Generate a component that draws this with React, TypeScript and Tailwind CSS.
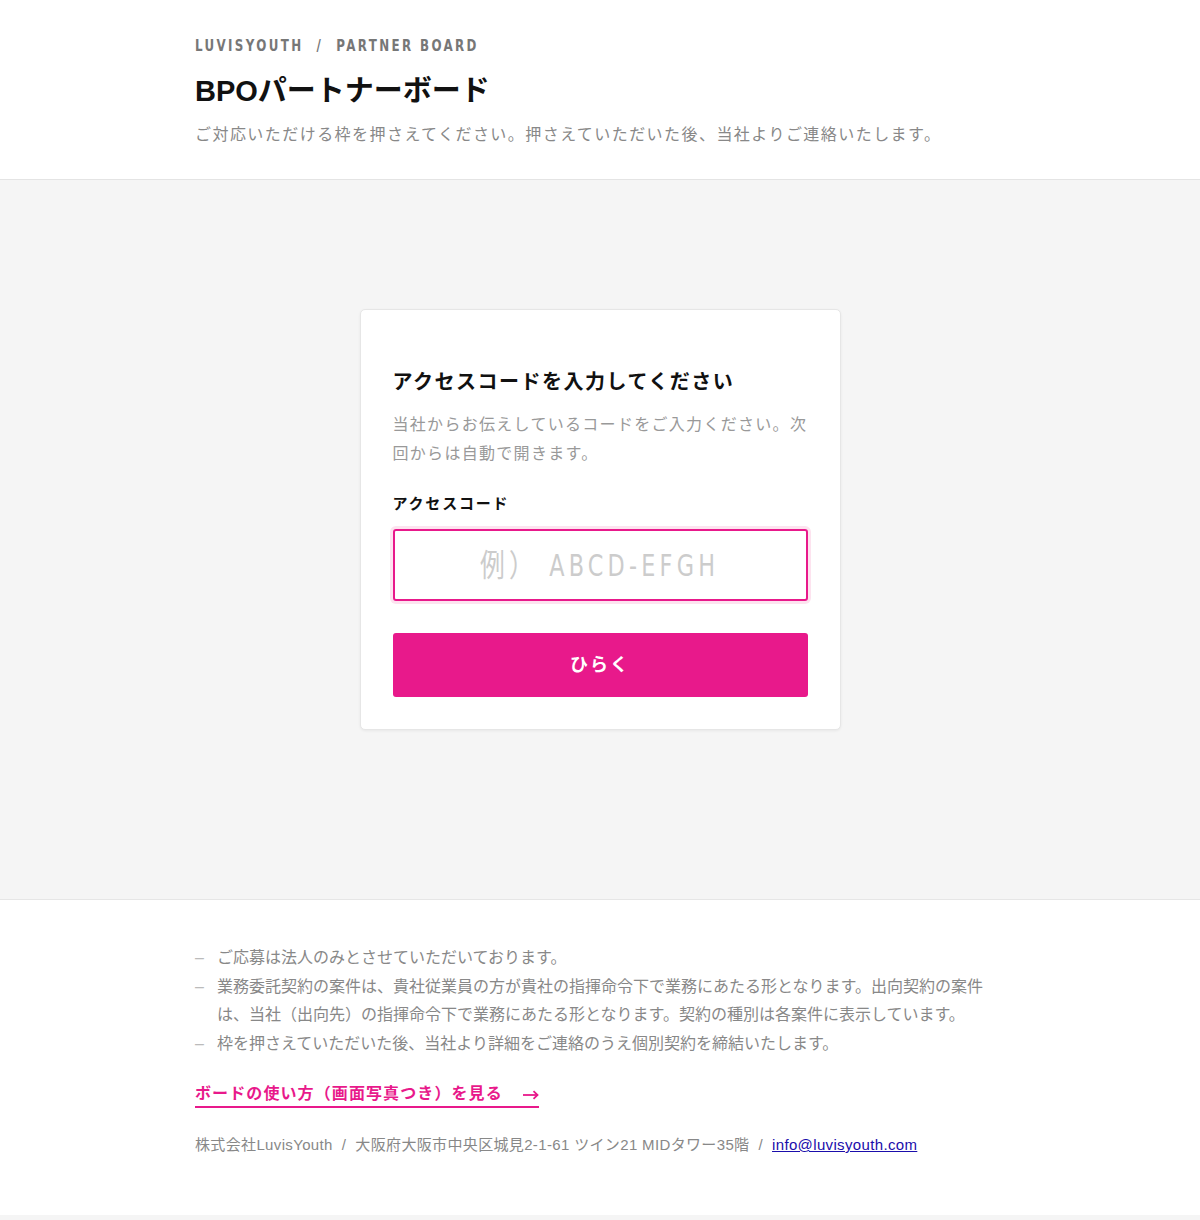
const jp = "font-['Liberation_Sans','Noto_Sans_CJK_JP',sans-serif]";
const cond = "font-['DejaVu_Sans_Condensed','Liberation_Sans','Noto_Sans_CJK_JP',sans-serif]";

const notes = [
  "ご応募は法人のみとさせていただいております。",
  "業務委託契約の案件は、貴社従業員の方が貴社の指揮命令下で業務にあたる形となります。出向契約の案件は、当社（出向先）の指揮命令下で業務にあたる形となります。契約の種別は各案件に表示しています。",
  "枠を押さえていただいた後、当社より詳細をご連絡のうえ個別契約を締結いたします。",
];

export default function App() {
  return (
    <div className={`${jp} bg-white min-h-[1220px] flex flex-col`}>
      <header className="border-b border-[#e4e4e4]">
        <div className="max-w-[810px] mx-auto pt-[37px] pb-[32px]">
          <div
            className={`${cond} text-[15px] font-bold leading-[18px] tracking-[0.18em] text-[#777] scale-x-[0.88] origin-left whitespace-nowrap`}
          >
            LUVISYOUTH&nbsp;&nbsp;/&nbsp;&nbsp;PARTNER BOARD
          </div>
          <h1 className="mt-[18px] text-[29px] leading-[36px] font-bold text-[#111]">
            BPOパートナーボード
          </h1>
          <p className="mt-[14px] text-[16px] leading-[24px] tracking-[1.45px] text-[#888]">
            ご対応いただける枠を押さえてください。押さえていただいた後、当社よりご連絡いたします。
          </p>
        </div>
      </header>

      <main className="bg-[#f5f5f5] pt-[129px] pb-[169px] flex justify-center border-b border-[#e6e6e6]">
        <div className="w-[481px] bg-white rounded-[5px] border border-[#e6e6e6] shadow-[0_1px_3px_rgba(0,0,0,0.06)] pt-[58px] px-[32px] pb-[32px]">
          <h2 className="text-[20px] leading-[28px] font-bold tracking-[1.5px] text-[#111]">
            アクセスコードを入力してください
          </h2>
          <p className="mt-[14px] text-[16px] leading-[29px] tracking-[1.3px] text-[#999]">
            当社からお伝えしているコードをご入力ください。次回からは自動で開きます。
          </p>
          <label className="block mt-[25px] text-[15px] leading-[22px] font-bold tracking-[1.8px] text-[#111]">
            アクセスコード
          </label>
          <div className="mt-[14px] h-[72px] border-2 border-[#e8198b] rounded-[3px] ring-[3px] ring-[#fde3ef] flex items-center justify-center">
            <span
              className={`${cond} text-[31px] tracking-[0.17em] text-[#cccccc] scale-x-[0.8] whitespace-nowrap`}
            >
              例）&nbsp;ABCD-EFGH
            </span>
          </div>
          <button className="mt-[32px] w-full h-[64px] rounded-[3px] bg-[#e8198b] text-white text-[18px] font-bold tracking-[2px]">
            ひらく
          </button>
        </div>
      </main>

      <footer className="flex-1">
        <div className="max-w-[810px] mx-auto pt-[44px] pb-[58px]">
          <ul className="text-[16px] leading-[28.5px] text-[#888]">
            {notes.map((n) => (
              <li key={n} className="flex">
                <span className="w-[22px] shrink-0 text-[#bbb]">–</span>
                <span className="max-w-[770px]">{n}</span>
              </li>
            ))}
          </ul>
          <a
            href="#"
            className="inline-flex items-center mt-[24px] text-[16px] leading-[24px] font-bold tracking-[1.1px] text-[#e8198b] border-b-2 border-[#e8198b]"
          >
            ボードの使い方（画面写真つき）を見る
            <svg
              width="16"
              height="10"
              viewBox="0 0 16 10"
              className="ml-[20px] mt-[1px]"
              fill="none"
              stroke="currentColor"
              strokeWidth="1.8"
            >
              <path d="M0 5h14.5" />
              <path d="M10.5 1.2L14.5 5l-4 3.8" strokeLinejoin="miter" />
            </svg>
          </a>
          <p className="mt-[25px] text-[15px] leading-[24px] tracking-[0.35px] text-[#888]">
            株式会社LuvisYouth&nbsp;&nbsp;/&nbsp;&nbsp;大阪府大阪市中央区城見2-1-61 ツイン21 MIDタワー35階&nbsp;&nbsp;/&nbsp;&nbsp;
            <a href="#" className="text-[#1a0dab] underline">
              info@luvisyouth.com
            </a>
          </p>
        </div>
        <div className="h-[6px] bg-[#f5f5f5]" />
      </footer>
    </div>
  );
}
